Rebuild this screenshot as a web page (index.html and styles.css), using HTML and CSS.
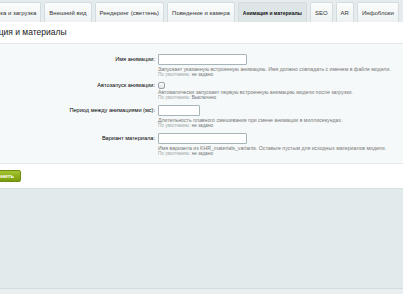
FILE: index.html
```html
<!DOCTYPE html>
<html>
<head>
    <title>Анимация и материалы</title>
    <link rel="stylesheet" href="styles.css">
</head>
<body>
    <div class="tabs">
        <div class="tab tab-first">Обработка и загрузка</div>
        <div class="tab">Внешний вид</div>
        <div class="tab">Рендеринг (светтень)</div>
        <div class="tab">Поведение и камера</div>
        <div class="tab tab-active">Анимация и материалы</div>
        <div class="tab">SEO</div>
        <div class="tab">AR</div>
        <div class="tab">Инфоблоки</div>
    </div>

    <div class="panel">
        <div class="panel-title">Анимация и материалы</div>

        <div class="form">
            <div class="row">
                <label class="row-label">Имя анимации:</label>
                <div class="row-field">
                    <input type="text" class="input input-wide">
                    <div class="hint">Запускает указанную встроенную анимацию. Имя должно совпадать с именем в файле модели.</div>
                    <div class="default">По умолчанию: <span>не задано</span></div>
                </div>
            </div>

            <div class="row">
                <label class="row-label row-label-check">Автозапуск анимации:</label>
                <div class="row-field">
                    <span class="check"></span>
                    <div class="hint hint-check">Автоматически запускает первую встроенную анимацию модели после загрузки.</div>
                    <div class="default">По умолчанию: <span>Выключено</span></div>
                </div>
            </div>

            <div class="row">
                <label class="row-label">Период между анимациями (мс):</label>
                <div class="row-field">
                    <input type="text" class="input input-short">
                    <div class="hint">Длительность плавного смешивания при смене анимации в миллисекундах.</div>
                    <div class="default">По умолчанию: <span>не задано</span></div>
                </div>
            </div>

            <div class="row">
                <label class="row-label">Вариант материала:</label>
                <div class="row-field">
                    <input type="text" class="input input-wide">
                    <div class="hint">Имя варианта из KHR_materials_variants. Оставьте пустым для исходных материалов модели.</div>
                    <div class="default">По умолчанию: <span>не задано</span></div>
                </div>
            </div>
        </div>

        <div class="buttons">
            <button class="btn-save">Сохранить</button>
        </div>
    </div>

    <div class="footer"></div>
</body>
</html>
```

FILE: styles.css
```css
body {
    margin: 0;
    background-color: #e9eef0;
    font-family: 'Liberation Sans', Arial, sans-serif;
    overflow: hidden;
}

/* Вкладки */
.tabs {
    display: flex;
    gap: 3px;
    height: 22px;
    padding-top: 2px;
    box-sizing: border-box;
    background-color: #e6ecee;
    white-space: nowrap;
    overflow: hidden;
}

.tab {
    flex: none;
    display: flex;
    align-items: center;
    padding: 0 4px;
    font-size: 6px;
    color: #333;
    background: linear-gradient(#fbfcfc, #eef2f3);
    border: 1px solid #d3dcdf;
    border-bottom: none;
    border-radius: 2px 2px 0 0;
}

.tab-first {
    margin-left: -29px;
}

.tab-active {
    background: #dde5e7;
    font-weight: bold;
    font-size: 5px;
    color: #111;
    padding: 0 4px;
}

/* Панель */
.panel {
    background-color: #fff;
}

.panel-title {
    height: 21px;
    line-height: 21px;
    margin-left: -27px;
    font-size: 8.5px;
    color: #222;
    border-bottom: 1px solid #e3e9eb;
}

.form {
    background-color: #f6f9f9;
    padding: 10px 0 2px;
    border-bottom: 1px solid #e6ecee;
}

.row {
    display: grid;
    grid-template-columns: 155px 1fr;
    column-gap: 3px;
    margin-bottom: 4.5px;
}

.row-label {
    text-align: right;
    font-size: 5.6px;
    line-height: 11px;
    color: #000;
    white-space: nowrap;
}

.row-label-check {
    line-height: 7px;
}

.row-field {
    min-width: 0;
}

.input {
    display: block;
    height: 11px;
    box-sizing: border-box;
    margin: 0;
    padding: 0 2px;
    border: 1px solid #a7b4b8;
    background: #fff;
    border-radius: 1px;
}

.input-wide {
    width: 89px;
}

.input-short {
    width: 42px;
}

.check {
    display: block;
    width: 7px;
    height: 7px;
    box-sizing: border-box;
    border: 1px solid #9aa5a9;
    border-radius: 2px;
    background: linear-gradient(#fff, #dde2e4);
}

.hint {
    margin-top: 1px;
    height: 6px;
    line-height: 6px;
    font-size: 5.2px;
    color: #777;
    white-space: nowrap;
}

.hint-check {
    margin-top: 0;
}

.default {
    height: 5.5px;
    line-height: 5.5px;
    font-size: 4.6px;
    color: #a0a6a8;
}

.default span {
    color: #6f7578;
}

.buttons {
    height: 24px;
    display: flex;
    align-items: center;
}

.btn-save {
    margin-left: -23px;
    height: 12px;
    padding: 0 6px;
    border: 1px solid #6e8c12;
    border-radius: 2px;
    background: linear-gradient(#a5c431, #799c0b);
    color: #fff;
    font-family: 'Liberation Sans', Arial, sans-serif;
    font-size: 5.6px;
    font-weight: bold;
}

.footer {
    height: 99px;
    background-color: #e2eaec;
    border-top: 1px solid #d6dfe1;
    border-bottom: 1px solid #d3dcde;
}
```
